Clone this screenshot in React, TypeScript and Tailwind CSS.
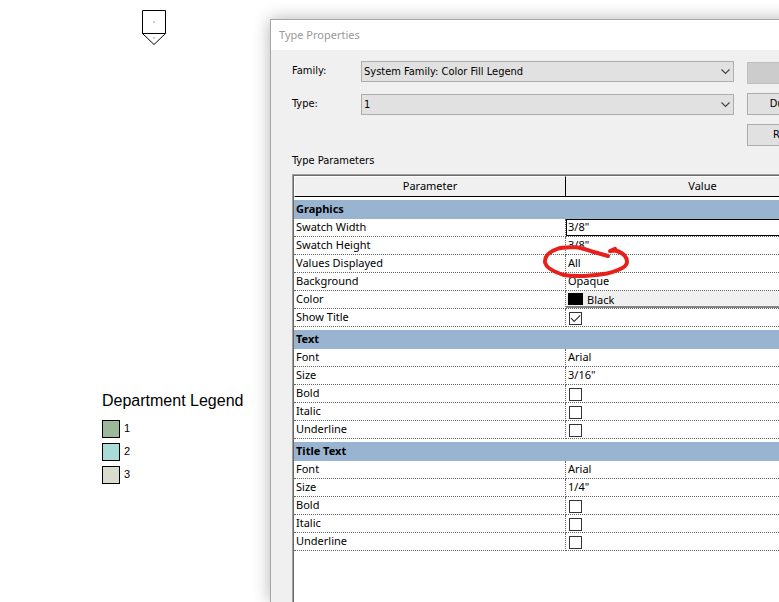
import { useState } from "react";

type Kind = "text" | "active" | "color" | "check";

interface Param {
  name: string;
  kind: Kind;
  value?: string;
  checked?: boolean;
}

interface Group {
  title: string;
  params: Param[];
}

const GROUPS: Group[] = [
  {
    title: "Graphics",
    params: [
      { name: "Swatch Width", kind: "active", value: '3/8"' },
      { name: "Swatch Height", kind: "text", value: '3/8"' },
      { name: "Values Displayed", kind: "text", value: "All" },
      { name: "Background", kind: "text", value: "Opaque" },
      { name: "Color", kind: "color", value: "Black" },
      { name: "Show Title", kind: "check", checked: true },
    ],
  },
  {
    title: "Text",
    params: [
      { name: "Font", kind: "text", value: "Arial" },
      { name: "Size", kind: "text", value: '3/16"' },
      { name: "Bold", kind: "check" },
      { name: "Italic", kind: "check" },
      { name: "Underline", kind: "check" },
    ],
  },
  {
    title: "Title Text",
    params: [
      { name: "Font", kind: "text", value: "Arial" },
      { name: "Size", kind: "text", value: '1/4"' },
      { name: "Bold", kind: "check" },
      { name: "Italic", kind: "check" },
      { name: "Underline", kind: "check" },
    ],
  },
];

const LEGEND = [
  { label: "1", color: "bg-[#9cb898]" },
  { label: "2", color: "bg-[#a9dcd6]" },
  { label: "3", color: "bg-[#d9dccd]" },
];

function SelectField({ id, label, value }: { id: string; label: string; value: string }) {
  return (
    <div className="flex h-[21px] items-center">
      <label htmlFor={id} className="w-[69px] shrink-0">
        {label}
      </label>
      <div className="relative flex-1">
        <select
          id={id}
          className="block h-[21px] w-full appearance-none border border-[#adadad] bg-[#e1e1e1] pl-[2px] leading-[19px] outline-none"
        >
          <option>{value}</option>
        </select>
        <svg
          viewBox="0 0 9 6"
          className="pointer-events-none absolute top-[8px] right-[4px] h-[6px] w-[9px]"
          fill="none"
          stroke="#444"
          strokeWidth="1.2"
        >
          <path d="M0.5 0.5 L4.5 4.5 L8.5 0.5" />
        </svg>
      </div>
    </div>
  );
}

function CheckField({ labelId, initial }: { labelId: string; initial: boolean }) {
  const [on, setOn] = useState(initial);
  return (
    <div className="relative h-[17px] pt-[3px] pl-[3px]">
      <input
        type="checkbox"
        aria-labelledby={labelId}
        checked={on}
        onChange={(e) => setOn(e.target.checked)}
        className="block size-[13px] appearance-none border border-[#333] bg-white"
      />
      {on && (
        <svg
          viewBox="0 0 13 13"
          className="pointer-events-none absolute top-[3px] left-[3px] size-[13px]"
          fill="none"
          stroke="#333"
          strokeWidth="1.2"
        >
          <path d="M2 6.2 L5.2 9.4 L11.2 3.4" />
        </svg>
      )}
    </div>
  );
}

function ValueCell({ param, labelId }: { param: Param; labelId: string }) {
  if (param.kind === "check") {
    return <CheckField labelId={labelId} initial={!!param.checked} />;
  }
  if (param.kind === "active") {
    return (
      <input
        type="text"
        aria-labelledby={labelId}
        defaultValue={param.value}
        className="block h-[17px] w-full border border-black bg-white pb-[2px] pl-px leading-[13px] outline-none"
      />
    );
  }
  if (param.kind === "color") {
    return (
      <button
        type="button"
        aria-labelledby={labelId}
        className="flex h-[17px] w-full items-center gap-[4px] border-b-2 border-[#858585] bg-[#f0f0f0] pt-px pl-[2px]"
      >
        <span className="h-[12px] w-[15px] bg-black" />
        {param.value}
      </button>
    );
  }
  return <div className="h-[17px] pl-[2px]">{param.value}</div>;
}

function ParameterTable() {
  return (
    <table className="w-full table-fixed border-separate border-spacing-0 text-left text-[11px] leading-[15px]">
      <colgroup>
        <col className="w-[272px]" />
        <col />
      </colgroup>
      <thead>
        <tr className="h-[21px] bg-[#f0f0f0] text-center">
          <th className="border-t border-r border-b border-l border-t-white border-r-black border-b-black border-l-white p-0 pb-[2px] font-normal">
            Parameter
          </th>
          <th className="border-t border-b border-t-white border-b-black p-0 pb-[2px] font-normal">
            Value
          </th>
        </tr>
      </thead>
      {GROUPS.map((group) => (
        <tbody key={group.title}>
          <tr className="h-[22px]">
            <th
              colSpan={2}
              scope="rowgroup"
              className="border-t-[3px] border-white bg-[#99b4d1] p-0 pb-[2px] pl-[2px] font-bold"
            >
              {group.title}
            </th>
          </tr>
          {group.params.map((param) => {
            const id = `${group.title}-${param.name}`.replace(/ /g, "-").toLowerCase();
            return (
              <tr key={param.name} className="h-[18px]">
                <th
                  id={id}
                  scope="row"
                  className="border-r border-b border-dotted border-[#666] p-0 pb-[2px] pl-[2px] font-normal"
                >
                  {param.name}
                </th>
                <td className="border-b border-dotted border-[#666] p-0">
                  <ValueCell param={param} labelId={id} />
                </td>
              </tr>
            );
          })}
        </tbody>
      ))}
    </table>
  );
}

function TypePropertiesDialog() {
  return (
    <section
      aria-label="Type Properties"
      className="mt-[19px] flex min-w-[591px] flex-1 flex-col border-t border-l border-[#a5a5a5] bg-[#f0f0f0] font-['Noto_Sans',sans-serif] text-[11px] text-black shadow-[0_0_16px_rgba(0,0,0,0.3)]"
    >
      <h1 className="h-[30px] bg-white pl-[8px] leading-[30px] text-[#999]">Type Properties</h1>
      <div className="flex flex-1 flex-col pt-[11px] pr-[12px] pl-[21px]">
        <div className="flex gap-[13px] font-['DejaVu_Sans_Condensed','DejaVu_Sans',sans-serif]">
          <div className="flex flex-1 flex-col gap-[12px]">
            <SelectField id="family" label="Family:" value="System Family: Color Fill Legend" />
            <SelectField id="type" label="Type:" value="1" />
          </div>
          <div className="flex w-[102px] flex-col gap-[9px] pt-px">
            <button
              type="button"
              disabled
              aria-label="Load"
              className="h-[22px] border border-[#bfbfbf] bg-[#ccc]"
            />
            <button type="button" className="h-[22px] border border-[#adadad] bg-[#e1e1e1]">
              Duplicate...
            </button>
            <button type="button" className="h-[22px] border border-[#adadad] bg-[#e1e1e1]">
              Rename...
            </button>
          </div>
        </div>
        <h2 className="mt-[5px] mb-[3px] h-[20px] font-['DejaVu_Sans_Condensed','DejaVu_Sans',sans-serif] leading-[20px]">
          Type Parameters
        </h2>
        <div className="mr-[10px] flex-1 border-t border-l border-[#a0a0a0]">
          <div className="relative h-full border-t border-l border-[#696969] bg-white">
            <ParameterTable />
            {/* red pen mark around the "All" value */}
            <svg
              viewBox="0 0 90 36"
              className="pointer-events-none absolute top-[68px] left-[246px] h-[36px] w-[90px]"
              fill="none"
              stroke="#e8201c"
              strokeWidth="4"
              strokeLinecap="round"
              strokeLinejoin="round"
            >
              <path d="M68 12 L52 7.5 C46 5.5 41 3.5 35 3.3 C28 3 22 3 17 5 C9 8 4.5 12 5 18 C6 24 14 28 24 31 C34 33 54 32 67 29.5 C77 27 87 23 87 18 C87 12 82 8.5 76 6.5 L70 7 L75 4.8" />
            </svg>
          </div>
        </div>
      </div>
    </section>
  );
}

export default function App() {
  return (
    <main className="flex h-screen overflow-hidden bg-white">
      <div className="w-[270px] shrink-0 pt-[10px] font-['Liberation_Sans',sans-serif] text-black">
        <svg viewBox="0 0 24 35" className="ml-[142px] h-[35px] w-[24px]" fill="none" stroke="#000">
          <path d="M0.5 0.5 H23.5 V23.5 H0.5 Z" />
          <path d="M0.5 23.5 L12 34.5 L23.5 23.5" />
          <path d="M11 12 h2 M11 28 h2" stroke="#ccc" strokeWidth="2" />
        </svg>
        <div className="mt-[346px] ml-[102px]">
          <h2 className="text-[16px] leading-[20px] whitespace-nowrap">Department Legend</h2>
          <ul className="mt-[8px] flex flex-col gap-[4px]">
            {LEGEND.map((item) => (
              <li key={item.label} className="flex h-[19px] items-center gap-[4px] text-[11px]">
                <span className={`size-[18px] border border-black ${item.color}`} />
                {item.label}
              </li>
            ))}
          </ul>
        </div>
      </div>
      <TypePropertiesDialog />
    </main>
  );
}
